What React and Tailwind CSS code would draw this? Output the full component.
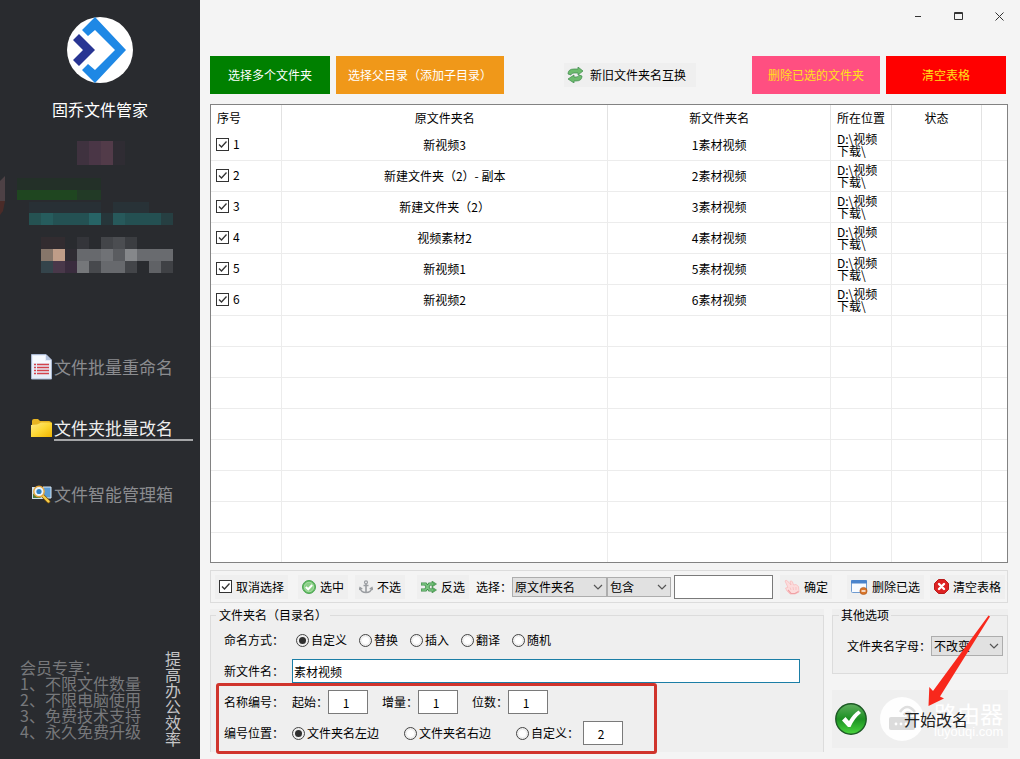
import { useState } from "react";
import { clsx } from "clsx";

const LOCATION = "D:\\视频下载\\";

const initialRows = [
  { id: 1, oldName: "新视频3", newName: "1素材视频" },
  { id: 2, oldName: "新建文件夹（2）- 副本", newName: "2素材视频" },
  { id: 3, oldName: "新建文件夹（2）", newName: "3素材视频" },
  { id: 4, oldName: "视频素材2", newName: "4素材视频" },
  { id: 5, oldName: "新视频1", newName: "5素材视频" },
  { id: 6, oldName: "新视频2", newName: "6素材视频" },
];

const emptyRows = [1, 2, 3, 4, 5, 6, 7, 8];

const perks = ["会员专享：", "1、不限文件数量", "2、不限电脑使用", "3、免费技术支持", "4、永久免费升级"];

// x, y, width, height, colour
const mosaic = [
  [77, 2, 12, 24, "#3f323f"],
  [89, 2, 12, 24, "#4a3646"],
  [101, 2, 12, 24, "#523b49"],
  [113, 2, 12, 24, "#2f2c33"],
  [17, 39, 84, 12, "#233028"],
  [17, 51, 60, 10, "#1f4620"],
  [77, 51, 24, 10, "#223a26"],
  [29, 63, 72, 11, "#283035"],
  [113, 63, 36, 11, "#283237"],
  [29, 74, 12, 12, "#255252"],
  [41, 74, 12, 12, "#265c5d"],
  [53, 74, 36, 12, "#245153"],
  [89, 74, 12, 12, "#276466"],
  [101, 74, 12, 12, "#26363a"],
  [113, 74, 12, 12, "#27595b"],
  [125, 74, 36, 12, "#245052"],
  [161, 74, 12, 12, "#263f42"],
  [41, 98, 24, 12, "#322c30"],
  [77, 98, 12, 12, "#34353a"],
  [101, 98, 12, 12, "#434549"],
  [113, 98, 12, 12, "#4b4d51"],
  [125, 98, 12, 12, "#3b3d41"],
  [41, 110, 12, 12, "#86766a"],
  [53, 110, 12, 12, "#bf9d88"],
  [65, 110, 12, 12, "#2f2c33"],
  [77, 110, 24, 12, "#67696d"],
  [101, 110, 12, 12, "#707276"],
  [113, 110, 12, 12, "#5a5c60"],
  [125, 110, 12, 12, "#85878a"],
  [137, 110, 36, 12, "#696b6f"],
  [41, 122, 12, 12, "#34444b"],
  [53, 122, 12, 12, "#49384a"],
  [65, 122, 12, 12, "#3a2c3e"],
  [77, 122, 12, 12, "#75777a"],
  [89, 122, 12, 12, "#47494d"],
  [101, 122, 24, 12, "#67696d"],
  [125, 122, 12, 12, "#434549"],
  [149, 122, 12, 12, "#606266"],
  [161, 122, 12, 12, "#3f4145"],
];

function Logo() {
  return (
    <svg className="w-[66px] h-[66px]" viewBox="0 0 66 66" aria-hidden="true">
      <circle cx="33" cy="33" r="33" fill="#fff" />
      <path d="M28 0 L59 33 L28 66 L15 53 L21 47 L28 53 L48 33 L28 13 L21 19 L15 13 Z" fill="#1e88e5" />
      <path d="M12 17 L28 33 L12 49 L6 43 L16 33 L6 23 Z" fill="#283593" />
    </svg>
  );
}

function DocIcon() {
  return (
    <svg className="w-[22px] h-[26px]" viewBox="0 0 22 26" aria-hidden="true">
      <path d="M.5 .5 H15 L20.500 6 V25 H.5 Z" fill="#e6edf9" stroke="#a9b8d2" />
      <path d="M2 2H14V7H19V9H2Z" fill="#f7faff" />
      <path d="M15 .5 V6 H20.500 Z" fill="#b4c3de" />
      <path d="M3 10.500H5M3 13.500H5M3 16.500H5M3 19.500H5M6 10.500H18M6 13.500H18M6 16.500H18M6 19.500H18" stroke="#d4434c" strokeWidth="1.700" />
    </svg>
  );
}

function FolderIcon() {
  return (
    <svg className="w-[22px] h-[20px]" viewBox="0 0 22 20" aria-hidden="true">
      <defs>
        <linearGradient id="folder-fill" x1="0" y1="0" x2="1" y2="1">
          <stop offset="0" stopColor="#ffe98a" />
          <stop offset=".5" stopColor="#fdd835" />
          <stop offset="1" stopColor="#f0b400" />
        </linearGradient>
      </defs>
      <path d="M1 3 Q1 1 3 1 H7 L9 3 H18 Q20 3 20 5 V8 H1 Z" fill="#e8b422" />
      <path d="M0 7 Q7 7 10 4.500 H21 V19 H0 Z" fill="url(#folder-fill)" />
    </svg>
  );
}

function SearchBoxIcon() {
  return (
    <svg className="w-[22px] h-[20px]" viewBox="0 0 22 20" aria-hidden="true">
      <path d="M1 3 H14 V15 H1 Z" fill="#cfe0ee" />
      <path d="M2 10 L6 8 L10 14 H2 Z" fill="#4d7a3c" />
      <path d="M12 3 H20 V14 H12 Z" fill="#5a9bd4" stroke="#dbe8f3" />
      <path d="M12 12 L17.500 17.500" stroke="#7a5210" strokeWidth="3.800" strokeLinecap="round" />
      <path d="M12 12 L17.500 17.500" stroke="#f7cf4a" strokeWidth="2.400" strokeLinecap="round" />
      <circle cx="8" cy="7.500" r="5.200" fill="#e8f5fd" stroke="#e3a43a" strokeWidth="1.400" />
      <circle cx="8" cy="7.500" r="2.600" fill="#2f7fc4" />
    </svg>
  );
}

function SwapIcon() {
  return (
    <svg className="w-[16px] h-[16px]" viewBox="0 0 16 16" aria-hidden="true">
      <path d="M1 7 Q1 2 7 2 H11 V0 L16 4 L11 8 V6 H7 Q4 6 4 8 Z" fill="#6dbb6d" stroke="#3d8a4c" strokeWidth=".7" />
      <path d="M15 9 Q15 14 9 14 H7 V16 L1 12 L7 8 V10 H9 Q12 10 12 8 Z" fill="#6dbb6d" stroke="#3d8a4c" strokeWidth=".7" />
    </svg>
  );
}

function RoundCheckIcon() {
  return (
    <svg className="w-[14px] h-[14px]" viewBox="0 0 14 14" aria-hidden="true">
      <circle cx="7" cy="7" r="6.500" fill="#5cb85c" stroke="#4fa556" />
      <circle cx="7" cy="7" r="4.800" fill="#8ccf88" stroke="#b4e2b0" strokeWidth=".8" />
      <path d="M3.800 7 L6.200 9.300 L10.200 5" fill="none" stroke="#fff" strokeWidth="2" />
    </svg>
  );
}

function AnchorIcon() {
  return (
    <svg className="w-[14px] h-[14px]" viewBox="0 0 14 14" fill="none" stroke="#9a9da1" aria-hidden="true">
      <circle cx="7" cy="2.300" r="1.500" strokeWidth="1.200" />
      <path d="M7 4V13M4.500 5.500H9.500" strokeWidth="1.600" />
      <path d="M1 8 Q2 12.500 7 12.500 Q12 12.500 13 8M0 10L1 7.500L3.300 9M14 10L13 7.500L10.700 9" strokeWidth="1.300" />
    </svg>
  );
}

function ShuffleIcon() {
  return (
    <svg className="w-[16px] h-[12px]" viewBox="0 0 16 12" aria-hidden="true">
      <path d="M0 3H4.500L8.500 9H12M0 9H4.500L8.500 3H12" fill="none" stroke="#3f8a48" strokeWidth="3.200" />
      <path d="M11 0L15.500 3L11 6ZM11 6L15.500 9L11 12Z" fill="#5aae62" stroke="#3f8a48" strokeWidth=".6" />
      <path d="M.5 3H4.500L8.500 9H12M.5 9H4.500L8.500 3H12" fill="none" stroke="#7cc782" strokeWidth="1.600" />
    </svg>
  );
}

function HandIcon() {
  return (
    <svg className="w-[16px] h-[16px]" viewBox="0 0 16 16" aria-hidden="true">
      <path
        d="M1 2 Q2 0.500 3.500 2 L7 6 L6 2.500 Q7.500 1 8.500 3 L9.500 6 L12 5.500 L14.500 7.500 L15 13 L11 15 H6 L3 12 L1.500 9 L4 8.500 Z"
        fill="#fcdcdc"
        stroke="#f7bcbe"
        strokeWidth=".8"
      />
      <path d="M4 11L7 14.500H11L14.500 12.500" fill="none" stroke="#f0a0a4" strokeWidth="1.200" />
      <path d="M6 8.500L7 11M9 8L9.500 11M12 8L12 11" stroke="#f5b9bb" strokeWidth=".7" />
    </svg>
  );
}

function WindowDeleteIcon() {
  return (
    <svg className="w-[17px] h-[16px]" viewBox="0 0 17 16" aria-hidden="true">
      <rect x=".5" y="1.500" width="15" height="12" rx="1" fill="#f8fbff" stroke="#6f9bd0" />
      <rect x="0" y="1" width="16" height="3.500" rx="1" fill="#4a84cc" />
      <circle cx="12.500" cy="12" r="3.600" fill="#d9752a" stroke="#a9541a" strokeWidth=".6" />
      <path d="M10.500 12H14.500" stroke="#fff" strokeWidth="1.400" />
    </svg>
  );
}

function ClearIcon() {
  return (
    <svg className="w-[15px] h-[15px]" viewBox="0 0 15 15" aria-hidden="true">
      <path d="M4.500 .5H10.500L14.500 4.500V10.500L10.500 14.500H4.500L.5 10.500V4.500Z" fill="#dd2222" stroke="#b81c1c" strokeLinejoin="round" />
      <path d="M5 5L10 10M10 5L5 10" stroke="#fff" strokeWidth="2.400" strokeLinecap="round" />
    </svg>
  );
}

function StartIcon() {
  return (
    <svg className="w-[32px] h-[32px] shrink-0" viewBox="0 0 32 32" aria-hidden="true">
      <defs>
        <linearGradient id="start-fill" x1="0" y1="0" x2="0" y2="1">
          <stop offset="0" stopColor="#5fae5f" />
          <stop offset=".5" stopColor="#1c9022" />
          <stop offset="1" stopColor="#4ad63e" />
        </linearGradient>
      </defs>
      <circle cx="16" cy="16" r="15.200" fill="url(#start-fill)" stroke="#1d5a25" strokeWidth="1.400" />
      <path d="M7 17.500L10.500 14L14 18Q18 11 23.500 7.500L26 10Q19.500 15 15.500 24H13Z" fill="#fff" />
    </svg>
  );
}

// Site stamp that sits behind the start label
function Stamp() {
  return (
    <span className="absolute left-12 top-1/2 flex -translate-y-1/2 items-center gap-[10px] text-left text-white" aria-hidden="true">
      <svg className="h-[44px] w-[44px] shrink-0" viewBox="0 0 44 44">
        <circle cx="22" cy="22" r="22" fill="#fff" fillOpacity=".9" />
        <rect x="9" y="20" width="26" height="13" rx="2" fill="#dcdcdc" />
        <path d="M28 21V16M20 15Q27 5 35 15M23.500 18Q28 13 32 18" fill="none" stroke="#dedede" strokeWidth="2.500" />
        <circle cx="16" cy="27" r="1.400" fill="#fff" />
        <circle cx="21" cy="27" r="1.400" fill="#fff" />
        <circle cx="26" cy="27" r="1.400" fill="#fff" />
      </svg>
      <span className="flex flex-col">
        <span className="text-[23px] leading-[26px]">路由器</span>
        <span className="font-['Liberation_Sans'] text-[13px] leading-[12px]">luyouqi.com</span>
      </span>
    </span>
  );
}

function CheckBox({ label, text, checked, onChange }) {
  return (
    <label className="inline-flex items-center gap-1">
      <span className="relative inline-flex">
        <input
          type="checkbox"
          aria-label={label}
          checked={checked}
          onChange={onChange}
          className="peer h-[13px] w-[13px] appearance-none border border-[#333] bg-white"
        />
        <svg className="pointer-events-none absolute inset-0 hidden h-[13px] w-[13px] peer-checked:block" viewBox="0 0 13 13">
          <path d="M3 6.500L5.500 9L10.500 3.500" fill="none" stroke="#333" strokeWidth="1.300" />
        </svg>
      </span>
      <span>{text}</span>
    </label>
  );
}

function Radio({ name, label, checked, onChange }) {
  return (
    <label className="inline-flex items-center gap-[2px]">
      <input
        type="radio"
        name={name}
        checked={checked}
        onChange={onChange}
        className="h-[13px] w-[13px] appearance-none rounded-full border border-[#444] bg-white bg-clip-content p-[2px] checked:bg-[#2f2f2f]"
      />
      <span>{label}</span>
    </label>
  );
}

function Select({ label, options, className }) {
  return (
    <span className={clsx("relative inline-flex", className)}>
      <select aria-label={label} className="h-5 w-full appearance-none border border-[#adadad] bg-[#e1e1e1] pr-4 pl-[2px] text-xs leading-[18px]">
        {options.map((o) => (
          <option key={o}>{o}</option>
        ))}
      </select>
      <svg className="pointer-events-none absolute top-[7px] right-1 h-[6px] w-[10px]" viewBox="0 0 10 6">
        <path d="M1 1L5 5L9 1" fill="none" stroke="#555" strokeWidth="1.200" />
      </svg>
    </span>
  );
}

function ToolButton({ icon, children, className }) {
  return (
    <button type="button" className={clsx("flex h-6 items-center gap-1 bg-[#efefef] px-1 whitespace-nowrap", className)}>
      {icon}
      {children}
    </button>
  );
}

function NumberField({ label, defaultValue }) {
  return (
    <label className="flex items-center">
      <span>{label}</span>
      <input type="text" defaultValue={defaultValue} className="h-6 w-10 border border-[#7a7a7a] bg-white pr-1 text-center" />
    </label>
  );
}

function NavItem({ icon, label, active }) {
  return (
    <a
      href="#"
      className={clsx(
        "relative flex h-8 items-center pl-[31px] text-[17px] whitespace-nowrap",
        active ? "mb-[5px] text-[#eeeeee]" : "text-[#8b8c8f]"
      )}
    >
      <span className="flex w-[23px]">{icon}</span>
      {label}
      {active && <span className="absolute right-[7px] bottom-[3px] left-[54px] h-[2px] bg-[#a5a6a8]"></span>}
    </a>
  );
}

function Sidebar() {
  return (
    <aside className="flex w-[200px] shrink-0 flex-col bg-[#292b2f] pt-[17px] pb-3">
      <div className="flex flex-col items-center gap-[14px]">
        <Logo />
        <h1 className="text-base leading-6 text-white">固乔文件管家</h1>
      </div>

      <svg className="mt-[18px] h-[138px] w-[200px]" viewBox="0 0 200 138" aria-hidden="true">
        {mosaic.map(([x, y, w, h, fill]) => (
          <rect key={`${x}-${y}`} x={x} y={y} width={w} height={h} fill={fill} shapeRendering="crispEdges" />
        ))}
        <path d="M0 42L5 37V62H0Z" fill="#4d4145" />
        <path d="M0 62H5L3 72L0 76Z" fill="#4a2b28" />
      </svg>

      <nav className="mt-[74px] flex flex-col gap-[29px]">
        <NavItem icon={<DocIcon />} label="文件批量重命名" />
        <NavItem icon={<FolderIcon />} label="文件夹批量改名" active />
        <NavItem icon={<SearchBoxIcon />} label="文件智能管理箱" />
      </nav>

      <div className="mt-auto flex items-center justify-between pr-[19px] pl-5 text-base leading-4">
        <ul className="text-[#77787b]">
          {perks.map((perk) => (
            <li key={perk}>{perk}</li>
          ))}
        </ul>
        <p className="text-[#c4c4c6] [writing-mode:vertical-rl]">提高办公效率</p>
      </div>
    </aside>
  );
}

function TitleBar() {
  return (
    <div className="flex h-8 items-center justify-end gap-[27px] pr-[2px] text-[#333]">
      <button type="button" aria-label="最小化" className="flex h-4 w-[14px] items-center justify-center">
        <svg className="h-[11px] w-[11px]" viewBox="0 0 11 11">
          <path d="M3 5.500H9" stroke="currentColor" />
        </svg>
      </button>
      <button type="button" aria-label="最大化" className="flex h-4 w-[14px] items-center justify-center">
        <svg className="h-[8px] w-[9px]" viewBox="0 0 9 8">
          <path d="M.5 .5H8.500V7.500H.5ZM0 1.500H9" fill="none" stroke="currentColor" />
        </svg>
      </button>
      <button type="button" aria-label="关闭" className="flex h-4 w-[14px] items-center justify-center">
        <svg className="h-[9px] w-[9px]" viewBox="0 0 9 9">
          <path d="M.5 .5L8.500 8.500M8.500 .5L.5 8.500" stroke="currentColor" />
        </svg>
      </button>
    </div>
  );
}

function FolderTable({ checked, onToggle }) {
  const cell = "border-r border-b border-[#ececec] p-0";
  const head = "border-r border-[#e2e2e2] p-0 font-normal";

  return (
    <div className="border border-[#828282] bg-white">
      <table className="w-full table-fixed border-separate border-spacing-0 text-center">
        <colgroup>
          <col className="w-[71px]" />
          <col className="w-[41%]" />
          <col />
          <col className="w-[61px]" />
          <col className="w-[90px]" />
          <col className="w-[25px]" />
        </colgroup>
        <thead>
          <tr className="h-[25px]">
            <th className={clsx(head, "pl-[6px] text-left")}>序号</th>
            <th className={head}>原文件夹名</th>
            <th className={head}>新文件夹名</th>
            <th className={head}>所在位置</th>
            <th className={head}>状态</th>
            <th className="p-0"></th>
          </tr>
        </thead>
        <tbody>
          {initialRows.map((row) => (
            <tr key={row.id} className="h-[31px]">
              <td className={clsx(cell, "pl-[5px] text-left")}>
                <CheckBox label={row.oldName} text={row.id} checked={checked.includes(row.id)} onChange={() => onToggle(row.id)} />
              </td>
              <td className={cell}>{row.oldName}</td>
              <td className={cell}>{row.newName}</td>
              <td className="border-r border-b border-[#ececec] px-[6px] py-0 text-left leading-3 break-all">{LOCATION}</td>
              <td className={cell}></td>
              <td className="border-b border-[#ececec] p-0"></td>
            </tr>
          ))}
          {emptyRows.map((n) => (
            <tr key={n} className="h-[31px] last:h-[29px] last:*:border-b-0">
              <td className={cell}></td>
              <td className={cell}></td>
              <td className={cell}></td>
              <td className={cell}></td>
              <td className={cell}></td>
              <td className="border-b border-[#ececec] p-0"></td>
            </tr>
          ))}
        </tbody>
      </table>
    </div>
  );
}

export default function App() {
  const [checked, setChecked] = useState(initialRows.map((r) => r.id));
  const [selectAll, setSelectAll] = useState(true);
  const [mode, setMode] = useState("自定义");
  const [position, setPosition] = useState("文件夹名左边");
  const [fileName, setFileName] = useState("素材视频");

  const toggleRow = (id) => {
    setChecked((prev) => (prev.includes(id) ? prev.filter((x) => x !== id) : [...prev, id]));
  };

  const toggleAll = () => {
    setChecked(selectAll ? [] : initialRows.map((r) => r.id));
    setSelectAll(!selectAll);
  };

  return (
    <div className="flex min-h-screen bg-[#f4f4f4] font-['Noto_Sans_CJK_SC',sans-serif] text-xs leading-4 text-black">
      <Sidebar />

      <main className="flex min-w-0 flex-1 flex-col pr-3 pl-[10px]">
        <TitleBar />

        {/* Toolbar */}
        <div className="mt-6 flex items-center pr-[2px] whitespace-nowrap">
          <button type="button" className="h-[38px] w-[120px] bg-[#008000] text-white">选择多个文件夹</button>
          <button type="button" className="ml-[6px] h-[38px] w-[168px] bg-[#f09819] text-white">选择父目录（添加子目录）</button>
          <button type="button" className="ml-[60px] flex h-6 w-[132px] items-center gap-[7px] bg-[#efefef] pl-[3px]">
            <SwapIcon />
            新旧文件夹名互换
          </button>
          <button type="button" className="ml-auto h-[38px] w-[128px] bg-[#ff4f81] text-[#ffe11a]">删除已选的文件夹</button>
          <button type="button" className="ml-[6px] h-[38px] w-[120px] bg-[#ff0000] text-[#ffe11a]">清空表格</button>
        </div>

        <div className="mt-[10px]">
          <FolderTable checked={checked} onToggle={toggleRow} />
        </div>

        {/* Filter bar */}
        <div className="mt-[7px] flex h-[33px] items-center border border-[#dcdcdc] bg-[#f4f4f4] pr-[2px] pl-1 whitespace-nowrap">
          <div className="flex h-6 items-center bg-[#efefef] px-1">
            <CheckBox text="取消选择" checked={selectAll} onChange={toggleAll} />
          </div>
          <ToolButton className="ml-[10px]" icon={<RoundCheckIcon />}>选中</ToolButton>
          <ToolButton className="ml-[7px]" icon={<AnchorIcon />}>不选</ToolButton>
          <ToolButton className="ml-3" icon={<ShuffleIcon />}>反选</ToolButton>
          <span className="ml-[7px]">选择：</span>
          <Select label="选择字段" options={["原文件夹名", "新文件夹名"]} className="w-[95px]" />
          <Select label="匹配方式" options={["包含", "不包含"]} className="w-16" />
          <input type="text" aria-label="关键字" className="ml-[3px] h-6 w-0 min-w-16 flex-1 border border-[#7a7a7a] bg-white px-1" />
          <ToolButton className="ml-[7px]" icon={<HandIcon />}>确定</ToolButton>
          <ToolButton className="ml-[15px]" icon={<WindowDeleteIcon />}>删除已选</ToolButton>
          <ToolButton className="ml-[6px]" icon={<ClearIcon />}>清空表格</ToolButton>
        </div>

        <div className="mt-[6px] flex items-start gap-2">
          <div className="relative min-w-0 flex-1 bg-[#efefef]">
            <fieldset className="border border-b-0 border-[#dcdcdc] pb-[7px] pl-[13px]">
              <legend className="-ml-2 px-[3px] leading-3">文件夹名（目录名）</legend>

              <div className="mt-[7px] flex flex-col gap-[7px] whitespace-nowrap">
                <div className="flex h-6 items-center gap-3">
                  <span className="w-[60px]">命名方式：</span>
                  <div className="flex gap-3">
                    {["自定义", "替换", "插入", "翻译", "随机"].map((m) => (
                      <Radio key={m} name="mode" label={m} checked={mode === m} onChange={() => setMode(m)} />
                    ))}
                  </div>
                </div>

                <div className="flex h-6 items-center gap-2 pr-[23px]">
                  <label htmlFor="file-name" className="w-[60px]">新文件名：</label>
                  <input
                    id="file-name"
                    type="text"
                    value={fileName}
                    onChange={(e) => setFileName(e.target.value)}
                    className="h-6 min-w-0 flex-1 border border-[#1b7ea6] bg-white px-[1px]"
                  />
                </div>

                <div className="flex h-6 items-center gap-2">
                  <span className="w-[60px]">名称编号：</span>
                  <div className="flex gap-[14px]">
                    <NumberField label="起始：" defaultValue="1" />
                    <NumberField label="增量：" defaultValue="1" />
                    <NumberField label="位数：" defaultValue="1" />
                  </div>
                </div>

                <div className="flex h-6 items-center gap-2">
                  <span className="w-[60px]">编号位置：</span>
                  <div className="flex items-center gap-[25px]">
                    <Radio name="position" label="文件夹名左边" checked={position === "文件夹名左边"} onChange={() => setPosition("文件夹名左边")} />
                    <Radio name="position" label="文件夹名右边" checked={position === "文件夹名右边"} onChange={() => setPosition("文件夹名右边")} />
                    <div className="flex items-center gap-1">
                      <Radio name="position" label="自定义：" checked={position === "自定义"} onChange={() => setPosition("自定义")} />
                      <input type="text" aria-label="自定义位置" defaultValue="2" className="h-6 w-10 border border-[#7a7a7a] bg-white pr-1 text-center" />
                    </div>
                  </div>
                </div>
              </div>
            </fieldset>
            <div className="pointer-events-none absolute -bottom-[2px] left-[6px] h-[71px] w-[441px] rounded-[3px] border-[3px] border-[#d0342c]"></div>
          </div>

          <div className="relative w-[176px] shrink-0">
            <div className="bg-[#efefef]">
              <fieldset className="border border-[#dcdcdc] pb-[17px] pl-[14px]">
                <legend className="-ml-2 px-[2px] leading-3">其他选项</legend>
                <div className="mt-[15px] flex items-center whitespace-nowrap">
                  <span className="w-[84px]">文件夹名字母：</span>
                  <Select label="文件夹名字母" options={["不改变", "大写", "小写"]} className="w-[72px]" />
                </div>
              </fieldset>
            </div>

            <button type="button" className="relative mt-4 flex h-[58px] w-full items-center bg-[#efefef] pl-[3px] text-base text-[#222]">
              <Stamp />
              <StartIcon />
              <span className="relative ml-[37px]">开始改名</span>
            </button>

            <svg className="pointer-events-none absolute top-[6px] left-[95px] h-[92px] w-[65px]" viewBox="0 0 65 92" aria-hidden="true">
              <path d="M61.500 0.500L63 1.500L13 81.500L17 83.500L1.500 91L2.300 72L6 76Z" fill="#f8281c" />
            </svg>
          </div>
        </div>
      </main>
    </div>
  );
}
